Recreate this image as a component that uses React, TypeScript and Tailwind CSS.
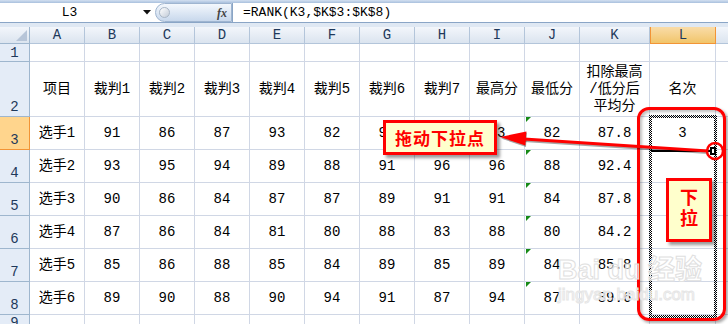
import React from 'react';

const cols = ['A', 'B', 'C', 'D', 'E', 'F', 'G', 'H', 'I', 'J', 'K', 'L'];

const rows = [
  ['选手1', '91', '86', '87', '93', '82', '90', '85', '93', '82', '87.8', '3'],
  ['选手2', '93', '95', '94', '89', '88', '91', '96', '96', '88', '92.4', ''],
  ['选手3', '90', '86', '84', '87', '87', '89', '91', '91', '84', '87.8', ''],
  ['选手4', '87', '86', '84', '81', '80', '88', '83', '88', '80', '84.2', ''],
  ['选手5', '85', '86', '88', '85', '84', '89', '85', '89', '84', '85.8', ''],
  ['选手6', '89', '90', '88', '90', '94', '91', '87', '94', '87', '89.6', ''],
];

const heads = ['项目', '裁判1', '裁判2', '裁判3', '裁判4', '裁判5', '裁判6', '裁判7', '最高分', '最低分', '', '名次'];

function FormulaBar() {
  return (
    <div className="h-[27px] flex flex-col bg-[#dfe8f3]">
      <div className="h-[3px] bg-gradient-to-b from-[#d3e0f1] to-[#a9c0dd]" />
      <div className="h-[20px] flex bg-white border-b border-[#8aa5c6]">
        <div className="w-[139px] flex items-center justify-center text-[13px] text-black">L3</div>
        <div className="w-[16px] flex items-center justify-center">
          <svg width="8" height="5" viewBox="0 0 8 5">
            <polygon points="0,0 8,0 4,4.5" fill="#111" />
          </svg>
        </div>
        <div className="w-[77px] flex items-center justify-between rounded-l-full border border-[#9fb5d0] bg-gradient-to-b from-[#f4f8fd] to-[#c8d8ec] pl-[3px] pr-[4px]">
          <div className="w-[11px] h-[11px] rounded-full border border-[#a9b6c6] bg-gradient-to-br from-white to-[#c3ccd8]" />
          <span className="font-['Liberation_Serif',serif] italic font-bold text-[12px] text-[#444] leading-none">fx</span>
        </div>
        <div className="flex-1 flex items-center pl-[10px] border-l border-[#8aa5c6] text-[13px] text-black whitespace-nowrap">
          =RANK(K3,$K$3:$K$8)
        </div>
      </div>
      <div className="h-[4px]" />
    </div>
  );
}

function Sheet() {
  return (
    <div className="grid grid-cols-[30px_repeat(10,55px)_70px_66px_1fr] grid-rows-[17px_18px_55px_repeat(6,33px)_9px]">
      {/* header row */}
      <div className="relative border-r border-b border-[#9eb6ce] bg-gradient-to-b from-[#f3f6fb] to-[#dbe4ef]">
        <svg className="absolute right-[2px] bottom-[2px]" width="11" height="11" viewBox="0 0 11 11">
          <polygon points="11,0 11,11 0,11" fill="#b7c5d8" />
        </svg>
      </div>
      {cols.map((c) =>
        c === 'L' ? (
          <div
            key={c}
            className="flex items-center justify-center border-x border-b border-[#f29436] bg-gradient-to-b from-[#f9dca8] to-[#f1c569] text-[14px] text-[#1e395b]"
          >
            {c}
          </div>
        ) : (
          <div
            key={c}
            className="flex items-center justify-center border-r border-b border-[#b3c5da] bg-gradient-to-b from-[#f3f6fb] to-[#dbe4ef] text-[14px] text-[#1e395b]"
          >
            {c}
          </div>
        )
      )}
      <div className="border-b border-[#b3c5da] bg-gradient-to-b from-[#f3f6fb] to-[#dbe4ef]" />

      {/* row 1 */}
      <div className="flex items-end justify-center border-r border-b border-[#9eb6ce] bg-[#e4ecf7] text-[14px] leading-[16px] text-[#1e395b]">1</div>
      {cols.map((c) => (
        <div key={c} className="border-r border-b border-[#d0d7e5]" />
      ))}
      <div className="border-b border-[#d0d7e5]" />

      {/* row 2 */}
      <div className="flex items-end justify-center border-r border-b border-[#9eb6ce] bg-[#e4ecf7] text-[14px] leading-[17px] text-[#1e395b]">2</div>
      {heads.map((h, i) =>
        i === 10 ? (
          <div key={i} className="flex flex-col items-center justify-center border-r border-b border-[#d0d7e5] text-[14px] leading-[17px]">
            <span>扣除最高</span>
            <span>/低分后</span>
            <span>平均分</span>
          </div>
        ) : (
          <div key={i} className="flex items-center justify-center border-r border-b border-[#d0d7e5] text-[14px] whitespace-nowrap">
            {h}
          </div>
        )
      )}
      <div className="border-b border-[#d0d7e5]" />

      {/* rows 3-8 */}
      {rows.map((r, ri) => (
        <React.Fragment key={ri}>
          {ri === 0 ? (
            <div className="flex items-end justify-center border-r border-b border-[#f29436] bg-[#ffd58d] text-[14px] leading-[18px] text-[#1e395b]">
              {ri + 3}
            </div>
          ) : (
            <div className="flex items-end justify-center border-r border-b border-[#9eb6ce] bg-[#e4ecf7] text-[14px] leading-[18px] text-[#1e395b]">
              {ri + 3}
            </div>
          )}
          {r.map((v, ci) => (
            <div key={ci} className="relative flex items-center justify-center border-r border-b border-[#d0d7e5] text-[14px] whitespace-nowrap">
              {ci === 9 && (
                <div className="absolute left-[1px] top-0 w-0 h-0 border-t-[5px] border-r-[5px] border-t-[#178a17] border-r-transparent" />
              )}
              {v}
            </div>
          ))}
          <div className="border-b border-[#d0d7e5]" />
        </React.Fragment>
      ))}

      {/* row 9 */}
      <div className="flex items-start justify-center border-r border-[#9eb6ce] bg-[#e4ecf7] text-[14px] leading-[16px] text-[#1e395b] overflow-hidden">9</div>
      {cols.map((c) => (
        <div key={c} className="border-r border-[#d0d7e5]" />
      ))}
      <div />
    </div>
  );
}

function Overlays() {
  return (
    <>
      {/* marching ants selection L3:L8 */}
      <svg className="absolute left-[649px] top-[115px] pointer-events-none" width="68" height="203" viewBox="0 0 68 203">
        <defs>
          <pattern id="ck" width="2" height="2" patternUnits="userSpaceOnUse">
            <rect x="0" y="0" width="1" height="1" fill="#000" />
            <rect x="1" y="1" width="1" height="1" fill="#000" />
          </pattern>
        </defs>
        <rect x="0" y="0" width="68" height="3" fill="url(#ck)" />
        <rect x="0" y="200" width="68" height="3" fill="url(#ck)" />
        <rect x="0" y="0" width="3" height="203" fill="url(#ck)" />
        <rect x="65" y="0" width="3" height="203" fill="url(#ck)" />
      </svg>

      {/* active cell bottom edge */}
      <div className="absolute left-[651px] top-[150px] w-[60px] h-[2px] bg-black" />

      {/* red highlight frame */}
      <div className="absolute left-[637px] top-[107px] w-[89px] h-[214px] rounded-[12px] border-[3px] border-[#f00] shadow-[2px_2px_3px_rgba(0,0,0,0.35),inset_2px_2px_3px_rgba(0,0,0,0.25)] pointer-events-none" />

      {/* arrow + fill handle circle */}
      <svg className="absolute left-0 top-0 pointer-events-none" width="728" height="324" viewBox="0 0 728 324">
        <line x1="708" y1="152.5" x2="524" y2="140.5" stroke="rgba(0,0,0,0.35)" strokeWidth="3" />
        <polygon points="501,138.5 527,132.5 526,147" fill="rgba(0,0,0,0.35)" />
        <line x1="708" y1="151" x2="524" y2="139" stroke="#f00" strokeWidth="3" />
        <polygon points="500,137 526.4,131.5 525.4,145.5" fill="#f00" />
        <rect x="710" y="147" width="6" height="8" fill="#000" />
        <rect x="712" y="149" width="2" height="4" fill="#fff" />
        <circle cx="715" cy="151" r="8" fill="none" stroke="#f00" strokeWidth="2.5" />
      </svg>

      {/* callout 1 */}
      <div className="absolute left-[383px] top-[120px] w-[114px] h-[35px] flex items-center justify-center bg-[#ffffcc] border-[3px] border-[#f00] shadow-[3px_3px_3px_rgba(0,0,0,0.4)] text-[#f00] font-bold text-[17px] font-['Noto_Sans_CJK_SC',sans-serif] tracking-[1px]">
        拖动下拉点
      </div>

      {/* callout 2 */}
      <div className="absolute left-[666px] top-[178px] w-[46px] h-[64px] flex flex-col items-center pt-[5px] bg-[#ffffcc] border-[3px] border-[#f00] shadow-[3px_3px_3px_rgba(0,0,0,0.4)] text-[#f00] font-bold text-[18px] leading-[21px] font-['Noto_Sans_CJK_SC',sans-serif]">
        <span>下</span>
        <span>拉</span>
      </div>

      {/* watermark */}
      <div className="absolute left-[558px] top-[254px] flex flex-col pointer-events-none">
        <span className="text-[27px] font-bold leading-[32px] text-white/60 [-webkit-text-stroke:1px_#e0e0e0] font-['Liberation_Sans','Noto_Sans_CJK_SC',sans-serif]">
          Bai du 经验
        </span>
        <span className="text-[17px] leading-[18px] text-white/60 [-webkit-text-stroke:1px_#e6e6e6] font-['Liberation_Sans',sans-serif]">
          jingyan.baidu.com
        </span>
      </div>
    </>
  );
}

export default function App() {
  return (
    <div className="relative w-[728px] h-[324px] overflow-hidden bg-white font-['Liberation_Mono','Noto_Sans_CJK_SC',monospace] text-black">
      <FormulaBar />
      <Sheet />
      <Overlays />
    </div>
  );
}
